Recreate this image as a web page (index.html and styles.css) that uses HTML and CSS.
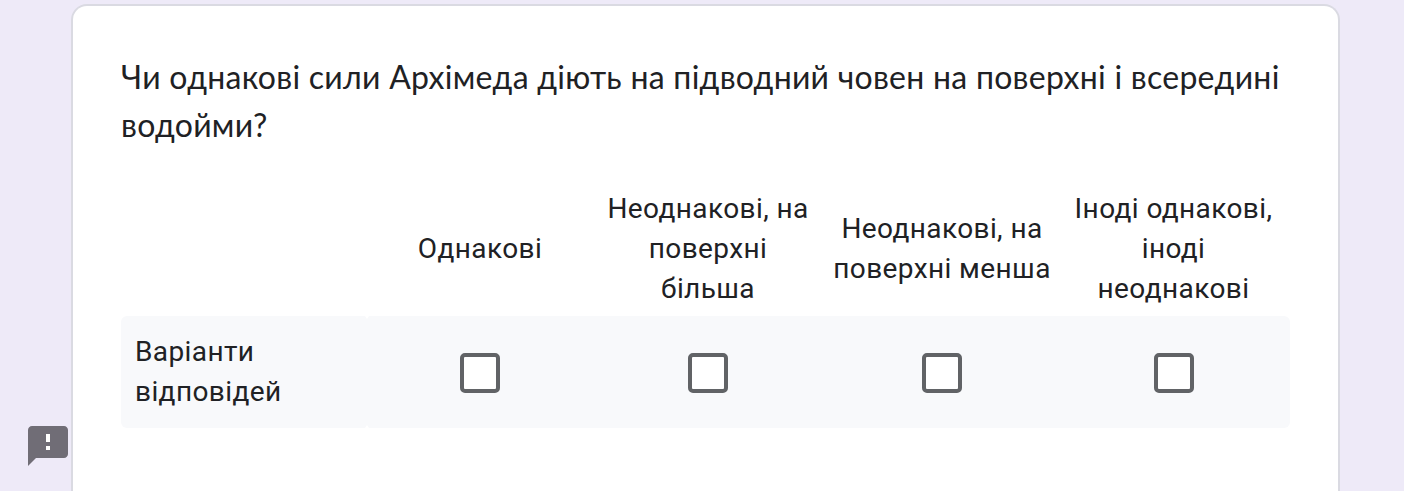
FILE: index.html
```html
<!DOCTYPE html>
<html lang="uk">
<head>
  <meta charset="UTF-8">
  <title>Сила Архімеда</title>
  <link rel="stylesheet" href="styles.css">
</head>
<body>

<div class="card">
  <h1><span class="line line-first">Чи однакові сили Архімеда діють на підводний човен на поверхні і всередині</span> <span class="line line-second">водойми?</span></h1>

  <form class="grid">
    <!-- Column titles -->
    <div class="row head">
      <div class="label"></div>
      <div class="cell">Однакові</div>
      <div class="cell">Неоднакові, на<br>поверхні<br>більша</div>
      <div class="cell">Неоднакові, на<br>поверхні менша</div>
      <div class="cell">Іноді однакові,<br>іноді<br>неоднакові</div>
    </div>

    <!-- Answers -->
    <div class="row answers">
      <div class="label">Варіанти<br>відповідей</div>
      <div class="cell"><input type="checkbox" aria-label="Однакові"></div>
      <div class="cell"><input type="checkbox" aria-label="Неоднакові, на поверхні більша"></div>
      <div class="cell"><input type="checkbox" aria-label="Неоднакові, на поверхні менша"></div>
      <div class="cell"><input type="checkbox" aria-label="Іноді однакові, іноді неоднакові"></div>
    </div>
  </form>
</div>

<!-- Report button -->
<button class="report" type="button" aria-label="Повідомити про проблему">
  <svg width="40" height="40" viewBox="2 2 20 20">
    <path fill="#706d76" d="M20 2H4c-1.1 0-2 .9-2 2v18l4-4h14c1.1 0 2-.9 2-2V4c0-1.1-.9-2-2-2z"/>
    <path fill="#fff" d="M11 6h2v4h-2zM11 12h2v2h-2z"/>
  </svg>
</button>

</body>
</html>
```

FILE: styles.css
```css
* {
  box-sizing: border-box;
}
body {
  margin: 0;
  padding: 4px 64px 0 71px;
  background: #eeeaf8;
  color: #202124;
  font-family: Roboto, sans-serif;
}
.card {
  height: 487px;
  padding: 47px 48px 0;
  background: white;
  border: 2px solid #dadae2;
  border-bottom: none;
  border-radius: 16px 16px 0 0;
}
h1 {
  margin: 0;
  font-family: Lato, sans-serif;
  font-size: 32px;
  font-weight: 400;
  line-height: 48px;
  letter-spacing: 0.27px;
}
.line {
  display: block;
  white-space: nowrap;
}
.grid {
  width: 1169px;
  margin-top: 32px;
  font-size: 28px;
  line-height: 40px;
  letter-spacing: 0.4px;
}
.row {
  display: grid;
  grid-template-columns: 246px 226px 230px 238px 225px 4px;
  align-items: center;
}
.head {
  height: 135px;
}
.cell {
  display: flex;
  justify-content: center;
  text-align: center;
  white-space: nowrap;
}
.answers {
  position: relative;
  height: 112px;
  background: #f8f9fb;
  border-radius: 6px;
}
/* small notches where the label meets the options */
.answers::before,
.answers::after {
  content: "";
  position: absolute;
  left: 244px;
  width: 4px;
  height: 3px;
  background: white;
}
.answers::before {
  top: 0;
  clip-path: polygon(0 0, 100% 0, 50% 100%);
}
.answers::after {
  bottom: 0;
  clip-path: polygon(0 100%, 100% 100%, 50% 0);
}
.answers .label {
  padding-left: 14px;
}
.answers .cell {
  padding-top: 2px;
}
input {
  appearance: none;
  width: 40px;
  height: 40px;
  margin: 0;
  background: white;
  border: 4px solid #616366;
  border-radius: 5px;
}
.report {
  position: absolute;
  left: 28px;
  top: 426px;
  padding: 0;
  background: none;
  border: none;
}
.report svg {
  display: block;
}
```
